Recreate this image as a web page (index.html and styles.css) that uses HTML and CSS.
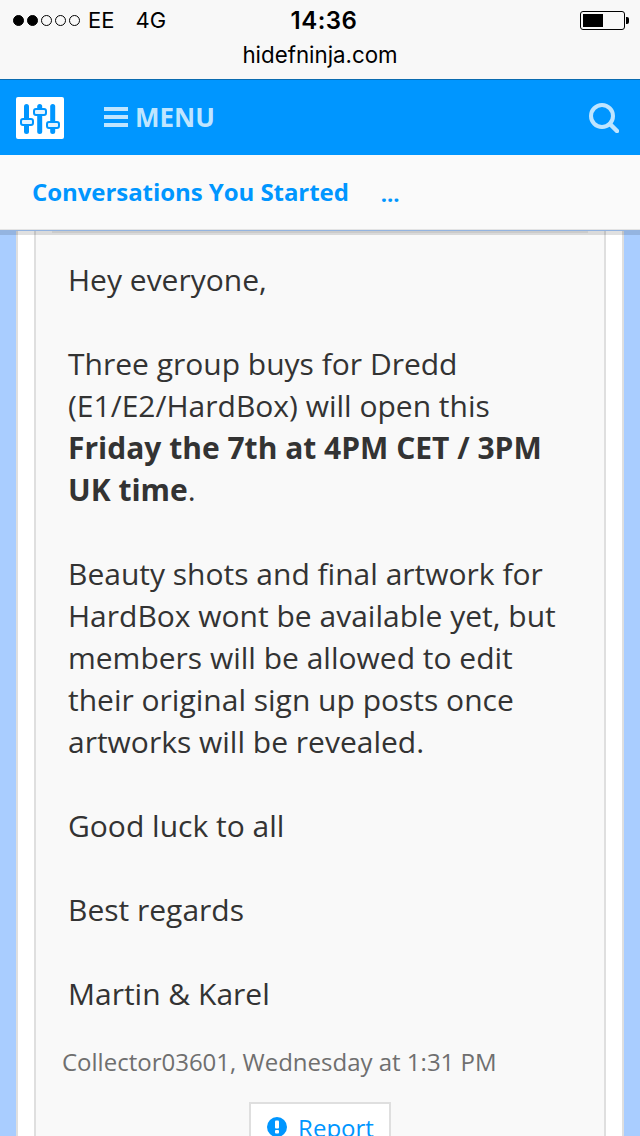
FILE: index.html
```html
<!DOCTYPE html>
<html lang="en">
<head>
  <meta charset="UTF-8">
  <title>Group buys for Dredd</title>
  <meta name="viewport" content="width=device-width, initial-scale=1">
  <link rel="stylesheet" href="styles.css">
</head>
<body>
<div class="chrome">
  <div class="status">
    <div class="status-left">
      <span class="signal">
        <i class="dot on"></i><i class="dot on"></i><i class="dot"></i><i class="dot"></i><i class="dot"></i>
      </span>
      <span class="carrier">EE</span>
      <span class="network">4G</span>
    </div>
    <div class="clock">14:36</div>
    <div class="status-right">
      <span class="battery"><span class="battery-level"></span></span>
      <span class="battery-tip"></span>
    </div>
  </div>
  <div class="address">hidefninja.com</div>
</div>

<div class="navbar">
  <div class="logo">
    <svg width="48" height="42" viewBox="0 0 48 42">
      <g fill="none" stroke="#0096ff" stroke-width="5" stroke-linecap="round">
        <path d="M10.5 9.5v25"/>
        <path d="M23.7 9.5v25"/>
        <path d="M36.7 9.5v25"/>
      </g>
      <g fill="#e4f3ff" stroke="#0096ff" stroke-width="2">
        <rect x="5" y="22" width="12" height="6" rx="2"/>
        <rect x="18" y="12" width="12" height="6" rx="2"/>
        <rect x="31" y="25" width="12" height="6" rx="2"/>
      </g>
    </svg>
  </div>
  <div class="menu">
    <span class="burger"><i></i><i></i><i></i></span>
    <span>MENU</span>
  </div>
  <svg class="search" width="30" height="30" viewBox="0 0 30 30">
    <circle cx="13" cy="13" r="11" fill="none" stroke="#bfe5ff" stroke-width="4"/>
    <path d="M21 21l7 7" fill="none" stroke="#bfe5ff" stroke-width="4.5" stroke-linecap="round"/>
  </svg>
</div>

<div class="subnav">
  <a class="subnav-title">Conversations You Started</a>
  <a class="subnav-more">...</a>
</div>

<div class="page">
  <div class="gutter">
    <div class="post">
      <div class="post-rule"></div>
      <div class="message">
        <p>Hey everyone,</p>
        <p>Three group buys for Dredd<br>(E1/E2/HardBox) will open this<br><b>Friday the 7th at 4PM CET / 3PM<br>UK time</b>.</p>
        <p>Beauty shots and final artwork for<br>HardBox wont be available yet, but<br>members will be allowed to edit<br>their original sign up posts once<br>artworks will be revealed.</p>
        <p>Good luck to all</p>
        <p>Best regards</p>
        <p>Martin &amp; Karel</p>
      </div>
      <div class="byline">Collector03601, Wednesday at 1:31 PM</div>
      <div class="actions">
        <a class="report">
          <svg width="22" height="22" viewBox="0 0 22 22">
            <circle cx="11" cy="11" r="10" fill="#0096ff"/>
            <rect x="9" y="4.5" width="4" height="8" rx="1" fill="#fff"/>
            <rect x="9" y="14" width="4" height="3.5" rx="1" fill="#fff"/>
          </svg>
          Report
        </a>
      </div>
    </div>
  </div>
</div>
</body>
</html>
```
FILE: styles.css
```css
* { box-sizing: border-box; }
html, body {
  height: 1136px;
  overflow: hidden;
}
body {
  margin: 0;
  background: #a9cdff;
  color: #333;
  font-family: 'Open Sans', sans-serif;
}

/* phone status bar + address */
.chrome {
  height: 80px;
  background: #f8f8f8;
  border-bottom: 1px solid #0a6bb0;
  color: #000;
  font-family: 'Inter', 'Liberation Sans', sans-serif;
}
.status {
  height: 40px;
  padding: 0 11px 0 13px;
  display: flex;
  align-items: center;
  justify-content: space-between;
  font-size: 22px;
}
.status-left {
  width: 206px;
  display: flex;
  align-items: center;
}
.signal {
  display: flex;
  gap: 3px;
  margin-right: 8px;
}
.dot {
  width: 11px;
  height: 11px;
  border: 1px solid #000;
  border-radius: 50%;
}
.dot.on { background: #000; }
.carrier { margin-right: 21px; }
.clock {
  font-weight: 600;
  font-size: 24px;
  letter-spacing: 0.5px;
}
.status-right {
  width: 200px;
  display: flex;
  align-items: center;
  justify-content: flex-end;
}
.battery {
  width: 45px;
  height: 19px;
  border: 1px solid #000;
  border-radius: 3px;
  padding: 2px;
  display: flex;
}
.battery-level {
  width: 20px;
  background: #000;
}
.battery-tip {
  width: 3px;
  height: 7px;
  background: #000;
  border-radius: 0 2px 2px 0;
  margin-left: 1px;
}
.address {
  text-align: center;
  font-size: 22.3px;
  line-height: 29px;
}

.navbar {
  height: 75px;
  background: #0096ff;
  display: flex;
  align-items: center;
  padding: 0 21px 0 16px;
}
.logo {
  width: 48px;
  height: 42px;
  background: #fff;
  border-radius: 2px;
}
.menu {
  margin-left: 40px;
  margin-top: -2px;
  display: flex;
  align-items: center;
  gap: 7px;
  color: #bfe5ff;
  font-weight: 700;
  font-size: 26px;
}
.burger {
  width: 24px;
  display: flex;
  flex-direction: column;
  gap: 4px;
}
.burger i {
  height: 4px;
  background: #bfe5ff;
}
.search { margin-left: auto; }

.subnav {
  height: 75px;
  background: #fafafa;
  display: flex;
  align-items: center;
  padding: 0 32px 2px;
  gap: 32px;
  color: #0096ff;
  font-weight: 700;
  font-size: 24px;
  letter-spacing: -0.06px;
  position: relative;
  z-index: 1;
  box-shadow: 0 5px 0 rgba(0, 0, 0, 0.12), inset 0 -1px 0 #e4e4e4;
}
.subnav-more {
  font-size: 22px;
  position: relative;
  top: 1px;
}

.page { padding: 0 16px; }
.gutter {
  background: #fff;
  border: solid #dfdfdf;
  border-width: 0 2px;
  padding: 0 16px;
  height: 906px;
}
.post {
  background: #f9f9f9;
  border: solid #dfdfdf;
  border-width: 0 2px;
  height: 100%;
  padding: 0 16px;
}
.post-rule {
  height: 2px;
  margin: 1px 0 0;
  background: #e8e8e8;
}
.message {
  padding: 26px 16px 0;
  font-size: 30px;
  line-height: 42px;
}
.message p { margin: 0 0 42px; }
.message p:last-child { margin-bottom: 0; }
.byline {
  margin-top: 29px;
  padding-left: 10px;
  font-size: 24px;
  line-height: 36px;
  color: #6f6f6f;
}
.actions {
  margin-top: 22px;
  display: flex;
  justify-content: center;
}
.report {
  display: flex;
  align-items: center;
  gap: 10px;
  height: 50px;
  padding: 0 15px;
  background: #fff;
  border: 2px solid #dfdfdf;
  color: #0096ff;
  font-size: 24px;
}
```
